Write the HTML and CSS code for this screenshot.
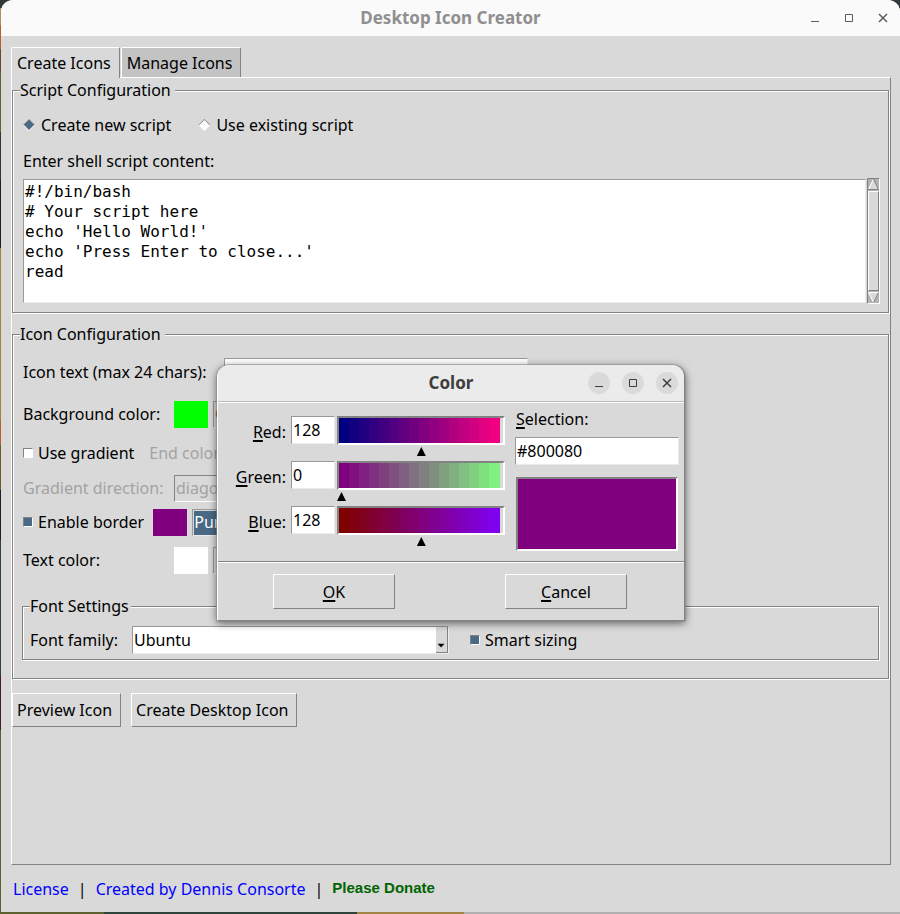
FILE: index.html
```html
<!DOCTYPE html>
<html lang="en">
<head>
<meta charset="utf-8">
<title>Desktop Icon Creator</title>
<link rel="stylesheet" href="styles.css">
</head>
<body>
<div class="window">
  <header class="titlebar">
    <h1>Desktop Icon Creator</h1>
    <div class="controls">
      <button type="button" aria-label="Minimize"><svg viewBox="0 0 10 10"><path d="M1 8.500h8"/></svg></button>
      <button type="button" aria-label="Maximize"><svg viewBox="0 0 10 10"><path d="M1.500 1.500h7v7h-7z"/></svg></button>
      <button type="button" aria-label="Close"><svg viewBox="0 0 10 10"><path class="cross" d="M1 1l8 8M9 1l-8 8"/></svg></button>
    </div>
  </header>

  <nav class="tabs" role="tablist">
    <button type="button" class="tab active" role="tab" aria-selected="true">Create Icons</button>
    <button type="button" class="tab" role="tab" aria-selected="false">Manage Icons</button>
  </nav>

  <main class="panel">
    <fieldset class="group script">
      <legend>Script Configuration</legend>
      <div class="radios">
        <label><input type="radio" name="mode" checked>Create new script</label>
        <label><input type="radio" name="mode">Use existing script</label>
      </div>
      <label class="block" for="code">Enter shell script content:</label>
      <div class="editor">
        <textarea id="code" class="sunken" rows="6" spellcheck="false">#!/bin/bash
# Your script here
echo 'Hello World!'
echo 'Press Enter to close...'
read
</textarea>
        <div class="scrollbar" aria-hidden="true">
          <svg viewBox="0 0 11 11"><path class="face" d="M5.500 0L0 11h11z"/><path class="light" d="M5.500 0L.5 10.500"/><path class="dark" d="M5.500 0l5 10.500H0"/></svg>
          <div class="thumb"></div>
          <svg viewBox="0 0 11 11"><path class="face" d="M5.500 11L0 0h11z"/><path class="light" d="M5.500 10.500L.5.500h10"/><path class="dark" d="M10.500.5l-5 10"/></svg>
        </div>
      </div>
    </fieldset>

    <fieldset class="group icon">
      <legend>Icon Configuration</legend>
      <div class="row first">
        <label class="text-name" for="text">Icon text (max 24 chars):</label>
        <input id="text" class="field sunken wide" type="text">
      </div>
      <div class="row tall">
        <label class="name" for="bg">Background color:</label>
        <span class="swatch lime"></span>
        <select id="bg" class="combo sunken flat"><option>Green</option></select>
      </div>
      <div class="row">
        <label><input type="checkbox">Use gradient</label>
        <span class="muted end">End color:</span>
      </div>
      <div class="row tall2">
        <label class="name muted" for="dir">Gradient direction:</label>
        <select id="dir" class="combo sunken flat" disabled><option>diagonal</option></select>
      </div>
      <div class="row border">
        <label><input type="checkbox" checked>Enable border</label>
        <span class="swatch purple"></span>
        <select class="combo sunken selected" aria-label="Border color"><option>Purple</option></select>
      </div>
      <div class="row tall">
        <label class="name" for="fg">Text color:</label>
        <span class="swatch white"></span>
        <select id="fg" class="combo sunken flat empty"><option>White</option></select>
      </div>
      <fieldset class="group font">
        <legend>Font Settings</legend>
        <div class="row">
          <label for="family">Font family:</label>
          <span class="picker sunken">
            <select id="family"><option>Ubuntu</option></select>
            <svg viewBox="0 0 12 27" aria-hidden="true"><path d="M2 18h7v1H8v1H7v1H6v1H5v-1H4v-1H3v-1H2z"/></svg>
          </span>
          <label class="smart"><input type="checkbox" checked>Smart sizing</label>
        </div>
      </fieldset>
    </fieldset>

    <div class="actions">
      <button type="button" class="raised">Preview Icon</button>
      <button type="button" class="raised">Create Desktop Icon</button>
    </div>
  </main>

  <footer>
    <a href="#license">License</a><span>|</span><a href="#author">Created by Dennis Consorte</a><span>|</span><a class="donate" href="#donate">Please Donate</a>
  </footer>
</div>

<section class="dialog" role="dialog" aria-labelledby="dialog-title">
  <header class="titlebar">
    <h2 id="dialog-title">Color</h2>
    <div class="controls">
      <button type="button" aria-label="Minimize"><svg viewBox="0 0 10 10"><path d="M1 8.500h8"/></svg></button>
      <button type="button" aria-label="Maximize"><svg viewBox="0 0 10 10"><path d="M1.500 1.500h7v7h-7z"/></svg></button>
      <button type="button" aria-label="Close"><svg viewBox="0 0 10 10"><path class="cross" d="M1 1l8 8M9 1l-8 8"/></svg></button>
    </div>
  </header>
  <div class="dialog-body">
    <div class="channels">
      <div class="channel">
        <label for="r"><u>R</u>ed:</label>
        <input id="r" class="field sunken" type="text" value="128">
        <div class="slider"><div class="ramp"><div class="red"></div></div><input type="range" min="0" max="255" value="128" aria-label="Red level"></div>
      </div>
      <div class="channel">
        <label for="g"><u>G</u>reen:</label>
        <input id="g" class="field sunken" type="text" value="0">
        <div class="slider"><div class="ramp"><div class="green"></div></div><input type="range" min="0" max="255" value="0" aria-label="Green level"></div>
      </div>
      <div class="channel">
        <label for="b"><u>B</u>lue:</label>
        <input id="b" class="field sunken" type="text" value="128">
        <div class="slider"><div class="ramp"><div class="blue"></div></div><input type="range" min="0" max="255" value="128" aria-label="Blue level"></div>
      </div>
    </div>
    <div class="selection">
      <label for="hex"><u>S</u>election:</label>
      <input id="hex" class="field sunken" type="text" value="#800080">
      <div class="preview"></div>
    </div>
  </div>
  <div class="dialog-actions">
    <button type="button" class="raised"><span><u>O</u>K</span></button>
    <button type="button" class="raised"><span><u>C</u>ancel</span></button>
  </div>
</section>
</body>
</html>
```
FILE: styles.css
```css
:root {
  --face: #d9d9d9;
  --shade: #828282;
  --accent: #4a6984;
}

* { box-sizing: border-box; }

body {
  margin: 0;
  min-height: 100vh;
  padding: 0 0 2px 1px;
  display: flex;
  flex-direction: column;
  position: relative;
  background:
    linear-gradient(90deg, #5d6130 0 104px, #2f443b 0 357px, #a08545 0 464px, #b0b0b0 0) bottom / 100% 2px no-repeat,
    linear-gradient(#30383a 0 8px, #b09060 0 25px, #b5602c 0 49px, #6b4a26 0 72px, #62642f 0 132px, #2b3a33 0 180px, #241a22 0 248px, #a8823a 0 420px, #b5602c 0 445px, #6b5a26 0 490px, #241a22 0 540px, #2f443b 0 675px, #4a1c22 0 730px, #5d6130 0);
  color: #000;
  font: 16px/22px "Noto Sans", sans-serif;
}

button, input, select, textarea {
  margin: 0;
  border: 0;
  border-radius: 0;
  padding: 0;
  font: inherit;
  color: inherit;
  appearance: none;
  outline: 0;
}

.window {
  flex: 1;
  display: flex;
  flex-direction: column;
  background: var(--face);
  border-radius: 12px 12px 0 0;
  overflow: hidden;
}

.titlebar {
  display: grid;
  grid-template-columns: 1fr auto 1fr;
  align-items: center;
  height: 36px;
  flex: none;
  background: #fafafa;
  color: #8f8f8f;
}

.titlebar h1, .titlebar h2 {
  grid-column: 2;
  margin: 0;
  font-size: 17px;
  font-weight: 700;
}

.controls {
  justify-self: end;
  display: flex;
  gap: 12px;
  padding-right: 6px;
}

.controls button {
  width: 22px;
  height: 22px;
  display: grid;
  place-items: center;
  border-radius: 50%;
  background: none;
}

.controls svg {
  width: 10px;
  height: 10px;
  fill: none;
  stroke: #5c5c5c;
}

.controls .cross { stroke-width: 1.500; }

.tabs {
  display: flex;
  gap: 1px;
  padding: 11px 10px 0;
}

.tab {
  height: 30px;
  padding: 0 8px 0 5px;
  border: 1px solid;
  border-color: #fff var(--shade) transparent #fff;
  border-bottom: 0;
  border-radius: 2px 2px 0 0;
  background: #c3c3c3;
}

.tab.active {
  height: 31px;
  margin-bottom: -1px;
  position: relative;
  background: var(--face);
}

.panel {
  flex: 1;
  margin: 0 9px 0 10px;
  padding-top: 1px;
  border: 1px solid;
  border-color: #fff var(--shade) var(--shade) #fff;
}

.group {
  min-width: 0;
  margin: 0 1px 0 0;
  padding: 0 8px 8px 10px;
  border: 1px solid var(--shade);
  box-shadow: inset 1px 1px #fff, 1px 1px #fff;
}

.group > legend {
  margin-left: -3px;
  padding: 0 4px 0 0;
  background: var(--face);
}

.radios {
  display: flex;
  gap: 27px;
  padding-top: 13px;
}

.radios label, .row label {
  display: flex;
  align-items: center;
}

[type="radio"] {
  width: 12px;
  height: 12px;
  margin-right: 6px;
  background: linear-gradient(var(--shade) 50%, #fff 50%);
  clip-path: polygon(50% 0, 100% 50%, 50% 100%, 0 50%);
  display: grid;
  place-items: center;
}

[type="radio"]::before {
  content: "";
  width: 10px;
  height: 10px;
  background: #fff;
  clip-path: inherit;
}

[type="radio"]:checked::before { background: var(--accent); }

[type="checkbox"] {
  width: 10px;
  height: 10px;
  margin-right: 5px;
  border: 1px solid;
  border-color: var(--shade) #fff #fff var(--shade);
  background: #fff;
}

[type="checkbox"]:checked { background: var(--accent); }

.block {
  display: block;
  padding: 14px 0 6px;
}

.sunken {
  border: 1px solid;
  border-color: #999 #ececec #ececec #999;
  background: #fff;
}

.editor {
  display: flex;
  gap: 1px;
  align-items: center;
}

.editor textarea {
  flex: 1;
  min-width: 0;
  height: 124px;
  padding: 2px 1px;
  resize: none;
  overflow: hidden;
  font: 16px/20px "DejaVu Sans Mono", monospace;
}

.scrollbar {
  width: 13px;
  height: 126px;
  display: flex;
  flex-direction: column;
  gap: 1px;
  border: 1px solid;
  border-color: var(--shade) #fff #fff var(--shade);
  background: #b3b3b3;
}

.scrollbar svg {
  width: 11px;
  height: 11px;
  fill: none;
}

.face { fill: var(--face); }
.light { stroke: #fff; }
.dark { stroke: var(--shade); }

.thumb {
  flex: 1;
  border: 1px solid;
  border-color: #fff var(--shade) var(--shade) #fff;
  background: var(--face);
}

.group.icon {
  margin-top: 10px;
  padding-bottom: 18px;
}

.row {
  display: flex;
  align-items: center;
  min-height: 28px;
}

.row.first { padding-top: 13px; }
.row.tall { margin: 14px 0 11px; }
.row.tall2 { margin-top: 7px; }
.row.border { margin-top: 6px; }
.row.border + .tall { margin-top: 10px; }

.name { width: 151px; }
.text-name { width: 191px; }
.muted { color: #a3a3a3; }
.end { margin-left: 15px; }

.field {
  height: 28px;
  padding: 0 1px;
}

.wide {
  width: 304px;
  margin-left: 10px;
}

.swatch {
  width: 34px;
  height: 27px;
  margin-right: 5px;
}

.lime { background: #0f0; }
.purple { background: purple; }
.white { background: #fff; }

.row.border .swatch { margin-left: 9px; }

.combo {
  width: 180px;
  height: 27px;
  padding: 0 1px;
}

.combo.flat { background: var(--face); }
.combo.empty { padding-left: 4px; }
.combo:disabled { color: #a3a3a3; opacity: 1; border-color: var(--shade) #fff #fff var(--shade); }

.combo.selected {
  background: var(--accent);
  color: #fff;
  box-shadow: inset 1px 1px var(--face);
}

.group.font {
  margin: 21px 1px 0 -1px;
  padding: 0 8px 5px 7px;
}

.group.font > legend {
  margin-left: 0;
  padding-right: 2px;
}

.group.font .row { padding-top: 9px; }

.picker {
  display: flex;
  width: 317px;
  height: 28px;
  margin-left: 14px;
}

.picker select {
  flex: 1;
  min-width: 0;
  padding-left: 1px;
  background: #fff;
}

.picker svg {
  width: 12px;
  background: var(--face);
  border-right: 1px solid var(--shade);
  border-bottom: 1px solid var(--shade);
}

.smart { margin-left: 21px; }

.actions {
  display: flex;
  gap: 10px;
  padding-top: 14px;
}

.raised {
  height: 34px;
  padding: 0 8px 0 4px;
  border: 1px solid;
  border-color: #fff var(--shade) var(--shade) #fff;
  background: var(--face);
}

footer {
  display: flex;
  gap: 9px;
  padding: 13px 12px 12px;
}

footer a {
  color: #00f;
  text-decoration: none;
}

footer .donate {
  color: #006400;
  font: bold 15px/20px "Liberation Sans", sans-serif;
}

.dialog {
  position: absolute;
  top: 365px;
  left: 217px;
  width: 468px;
  border-radius: 12px 12px 0 0;
  background: var(--face);
  border-bottom: 1px solid var(--shade);
  border-left: 1px solid #fff;
  border-right: 1px solid var(--shade);
  box-shadow: 0 0 0 1px #8888, 0 2px 8px #0009;
}

.dialog .titlebar {
  border-radius: 12px 12px 0 0;
  background: #ebebeb;
  color: #3d3d3d;
}

.dialog .controls button { background: #dadada; }
.dialog .controls svg { stroke: #3d3d3d; }

.dialog-body {
  display: flex;
  gap: 10px;
  padding: 14px 5px 10px 17px;
  border-top: 1px solid #bbb;
  border-bottom: 1px solid var(--shade);
  box-shadow: inset 0 1px #fff, 0 1px #fff;
}

.channels { flex: 1; }

.channel {
  display: grid;
  grid-template-columns: 54px 44px 1fr;
  column-gap: 2px;
  height: 45px;
}

.channel label {
  padding: 5px 3px 0 0;
  text-align: right;
}

.channel .field { width: 44px; }

u {
  text-decoration-thickness: 2px;
  text-underline-offset: 2px;
  text-decoration-skip-ink: none;
}

.ramp, .preview {
  border: 2px solid;
  border-color: var(--shade) #fff #fff var(--shade);
}

.ramp {
  height: 29px;
  padding-right: 3px;
}

.ramp div { height: 100%; }

.red {
  background: linear-gradient(90deg, rgb(0 0 128) 0 10px, rgb(16 0 128) 0 20px, rgb(32 0 128) 0 30px, rgb(48 0 128) 0 40px, rgb(64 0 128) 0 50px, rgb(80 0 128) 0 60px, rgb(96 0 128) 0 70px, rgb(112 0 128) 0 80px, rgb(128 0 128) 0 90px, rgb(144 0 128) 0 100px, rgb(160 0 128) 0 110px, rgb(176 0 128) 0 120px, rgb(192 0 128) 0 130px, rgb(208 0 128) 0 140px, rgb(224 0 128) 0 150px, rgb(240 0 128) 0);
}

.green {
  background: linear-gradient(90deg, rgb(128 0 128) 0 10px, rgb(128 16 128) 0 20px, rgb(128 32 128) 0 30px, rgb(128 48 128) 0 40px, rgb(128 64 128) 0 50px, rgb(128 80 128) 0 60px, rgb(128 96 128) 0 70px, rgb(128 112 128) 0 80px, rgb(128 128 128) 0 90px, rgb(128 144 128) 0 100px, rgb(128 160 128) 0 110px, rgb(128 176 128) 0 120px, rgb(128 192 128) 0 130px, rgb(128 208 128) 0 140px, rgb(128 224 128) 0 150px, rgb(128 240 128) 0);
}

.blue {
  background: linear-gradient(90deg, rgb(128 0 0) 0 10px, rgb(128 0 16) 0 20px, rgb(128 0 32) 0 30px, rgb(128 0 48) 0 40px, rgb(128 0 64) 0 50px, rgb(128 0 80) 0 60px, rgb(128 0 96) 0 70px, rgb(128 0 112) 0 80px, rgb(128 0 128) 0 90px, rgb(128 0 144) 0 100px, rgb(128 0 160) 0 110px, rgb(128 0 176) 0 120px, rgb(128 0 192) 0 130px, rgb(128 0 208) 0 140px, rgb(128 0 224) 0 150px, rgb(128 0 240) 0);
}

.slider [type="range"] {
  display: block;
  width: 100%;
  height: 9px;
  margin-top: 2px;
  background: none;
}

.slider [type="range"]::-webkit-slider-thumb {
  appearance: none;
  width: 9px;
  height: 9px;
  background: #000;
  clip-path: polygon(50% 0, 100% 100%, 0 100%);
}

.selection {
  width: 164px;
  display: flex;
  flex-direction: column;
}

.selection label { margin: -8px 0 7px 1px; }

.preview {
  height: 74px;
  margin: 12px 1px 0;
  background: purple;
}

.dialog-actions {
  display: flex;
  justify-content: space-around;
  padding: 12px 2px 11px 0;
}

.dialog-actions .raised {
  width: 122px;
  height: 35px;
  padding: 0;
}
```
